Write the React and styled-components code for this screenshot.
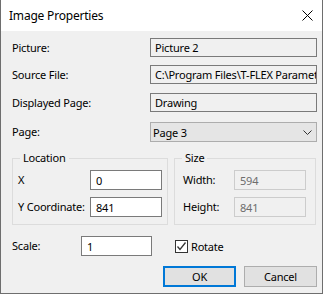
import React from "react";
import styled, { createGlobalStyle } from "styled-components";

const Global = createGlobalStyle`
  html, body { margin: 0; padding: 0; background: #f0f0f0; }
  body { font-family: "Noto Sans", "Liberation Sans", sans-serif; font-size: 11px; letter-spacing: -0.2px; color: #000; }
  * { box-sizing: border-box; }
`;

const Window = styled.div`
  width: 323px;
  height: 294px;
  border: 1px solid #6e6e6e;
  border-top: none;
  background: #f0f0f0;
  display: flex;
  flex-direction: column;
  overflow: hidden;
`;

const TitleBar = styled.div`
  height: 31px;
  flex: none;
  background: #fff;
  display: flex;
  align-items: center;
  justify-content: space-between;
  padding: 0 9px 0 8px;
  font-size: 12px;
`;

const CloseIcon = () => (
  <svg width="11" height="11" viewBox="0 0 11 11">
    <path d="M0.5 0.5 L10.5 10.5 M10.5 0.5 L0.5 10.5" stroke="#000" strokeWidth="1" fill="none" />
  </svg>
);

const Body = styled.div`
  flex: 1;
  padding: 7px 5px 0 11px;
  display: flex;
  flex-direction: column;
`;

const FormGrid = styled.div`
  display: grid;
  grid-template-columns: 138px 167px;
  grid-template-rows: 27px 28px 29px 20px;
  align-items: start;
`;

const Label = styled.span`
  white-space: nowrap;
  line-height: 16px;
`;

const RowLabel = styled(Label)`
  height: ${(p) => p.$h || 19}px;
  display: flex;
  align-items: center;
`;

const ReadOnlyBox = styled.div`
  height: 19px;
  border: 1px solid #7a7a7a;
  background: #f0f0f0;
  padding: 0 4px;
  display: flex;
  align-items: center;
  white-space: nowrap;
  overflow: hidden;
`;

const Select = styled.div`
  height: 20px;
  border: 1px solid #adadad;
  background: #e5e5e5;
  padding: 0 4px 0 2px;
  display: flex;
  align-items: center;
  justify-content: space-between;
`;

const Chevron = () => (
  <svg width="9" height="5" viewBox="0 0 9 5">
    <path d="M0.5 0.5 L4.5 4.5 L8.5 0.5" stroke="#333" strokeWidth="1" fill="none" />
  </svg>
);

const Groups = styled.div`
  display: flex;
  gap: 6px;
  margin-top: 16px;
`;

const Group = styled.div`
  position: relative;
  width: ${(p) => p.$w}px;
  height: 67px;
  border: 1px solid #dcdcdc;
  padding: 11px ${(p) => p.$pr}px 0 ${(p) => p.$pl}px;
  display: grid;
  grid-template-columns: 1fr 72px;
  grid-template-rows: 20px 20px;
  row-gap: 7px;
  align-items: center;
`;

const Legend = styled.span`
  position: absolute;
  top: -9px;
  left: ${(p) => p.$x}px;
  padding: 0 3px;
  background: #f0f0f0;
  line-height: 16px;
`;

const Input = styled.div`
  height: 20px;
  border: 1px solid ${(p) => (p.$disabled ? "#cccccc" : "#7a7a7a")};
  background: ${(p) => (p.$disabled ? "#f0f0f0" : "#fff")};
  color: ${(p) => (p.$disabled ? "#6d6d6d" : "#000")};
  padding: 0 5px;
  display: flex;
  align-items: center;
  width: ${(p) => p.$w || 72}px;
`;

const ScaleRow = styled.div`
  display: flex;
  align-items: center;
  margin-top: 11px;
  height: 20px;
`;

const ScaleLabel = styled(Label)`
  width: 69px;
`;

const CheckWrap = styled.label`
  display: flex;
  align-items: center;
  gap: 3px;
  margin-left: 23px;
`;

const CheckBox = styled.span`
  width: 13px;
  height: 13px;
  border: 1px solid #333;
  background: #fff;
  display: flex;
  align-items: center;
  justify-content: center;
`;

const CheckMark = () => (
  <svg width="11" height="11" viewBox="0 0 11 11">
    <path d="M1.5 5.5 L4 8.5 L9.5 1.5" stroke="#333" strokeWidth="1.3" fill="none" />
  </svg>
);

const Buttons = styled.div`
  display: flex;
  justify-content: flex-end;
  gap: 8px;
  margin-top: 10px;
`;

const Button = styled.div`
  width: 73px;
  height: 21px;
  background: #e1e1e1;
  border: ${(p) => (p.$default ? "2px solid #0078d7" : "1px solid #adadad")};
  display: flex;
  align-items: center;
  justify-content: center;
`;

export default function App() {
  return (
    <>
      <Global />
      <Window>
        <TitleBar>
          <span>Image Properties</span>
          <CloseIcon />
        </TitleBar>
        <Body>
          <FormGrid>
            <RowLabel>Picture:</RowLabel>
            <ReadOnlyBox>Picture 2</ReadOnlyBox>
            <RowLabel>Source File:</RowLabel>
            <ReadOnlyBox>C:\Program Files\T-FLEX Parametric CAD 17\Program\Image.bmp</ReadOnlyBox>
            <RowLabel>Displayed Page:</RowLabel>
            <ReadOnlyBox>Drawing</ReadOnlyBox>
            <RowLabel $h={20}>Page:</RowLabel>
            <Select>
              <span>Page 3</span>
              <Chevron />
            </Select>
          </FormGrid>
          <Groups>
            <Group $w={156} $pl={5} $pr={5}>
              <Legend $x={7}>Location</Legend>
              <Label>X</Label>
              <Input>0</Input>
              <Label>Y Coordinate:</Label>
              <Input>841</Input>
            </Group>
            <Group $w={142} $pl={8} $pr={9}>
              <Legend $x={7}>Size</Legend>
              <Label>Width:</Label>
              <Input $disabled>594</Input>
              <Label>Height:</Label>
              <Input $disabled>841</Input>
            </Group>
          </Groups>
          <ScaleRow>
            <ScaleLabel>Scale:</ScaleLabel>
            <Input $w={71}>1</Input>
            <CheckWrap>
              <CheckBox>
                <CheckMark />
              </CheckBox>
              <span>Rotate</span>
            </CheckWrap>
          </ScaleRow>
          <Buttons>
            <Button $default>OK</Button>
            <Button>Cancel</Button>
          </Buttons>
        </Body>
      </Window>
    </>
  );
}
